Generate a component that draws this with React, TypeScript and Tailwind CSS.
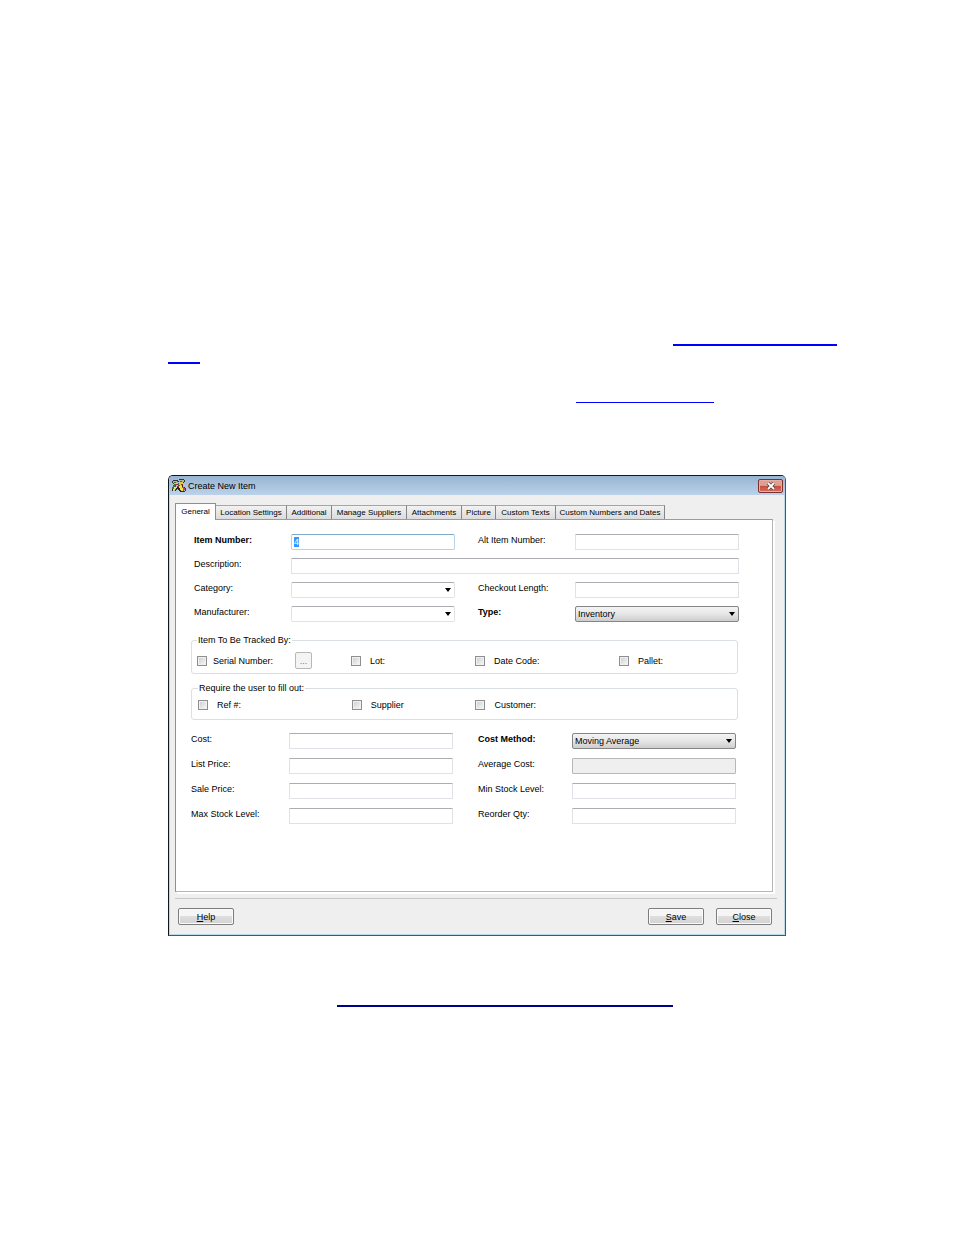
import { useEffect, useRef, type ReactNode } from 'react'
import clsx from 'clsx'

const TABS = [
  { name: 'General', width: 'w-[41px]' },
  { name: 'Location Settings', width: 'w-[71px]' },
  { name: 'Additional', width: 'w-[45px]' },
  { name: 'Manage Suppliers', width: 'w-[75px]' },
  { name: 'Attachments', width: 'w-[55px]' },
  { name: 'Picture', width: 'w-[34px]' },
  { name: 'Custom Texts', width: 'w-[60px]' },
  { name: 'Custom Numbers and Dates', width: 'w-[109px]' },
]

const inputClass =
  'h-4 w-full min-w-0 rounded-[1px] border border-[#dfe2e6] border-t-[#abadb3] bg-white px-0.5 text-[9px] leading-3 outline-none'

function Label({ id, bold, className, children }: { id: string; bold?: boolean; className?: string; children: ReactNode }) {
  return (
    <label htmlFor={id} className={clsx('pb-1 whitespace-nowrap', bold && 'font-bold', className)}>
      {children}
    </label>
  )
}

function Select({ id, value, raised }: { id: string; value?: string; raised?: boolean }) {
  return (
    <div className="relative">
      <select
        id={id}
        className={clsx(
          'block h-4 w-full appearance-none rounded-[2px] border px-0.5 text-[9px] leading-3 outline-none',
          raised
            ? 'border-[#858585] bg-linear-to-b from-[#f4f4f4] via-[#e6e6e6] to-[#cdcdcd]'
            : 'border-[#dfe2e6] border-t-[#abadb3] bg-white'
        )}
      >
        <option>{value}</option>
      </select>
      <svg viewBox="0 0 6 4" className="pointer-events-none absolute top-1.5 right-1 h-1 w-1.5">
        <path d="M0 0h6L3 4z" />
      </svg>
    </div>
  )
}

function Check({ id, label, wide = true }: { id: string; label: string; wide?: boolean }) {
  return (
    <div className={clsx('flex items-center', wide ? 'gap-[9px]' : 'gap-1.5')}>
      <input
        id={id}
        type="checkbox"
        className="size-2.5 shrink-0 appearance-none border border-[#8f8f8f] bg-linear-to-br from-[#c9ccd1] to-[#fafafa] shadow-[inset_0_0_0_1px_#f0f0f0]"
      />
      <label htmlFor={id} className="whitespace-nowrap">
        {label}
      </label>
    </div>
  )
}

function FormButton({ mnemonic, rest }: { mnemonic: string; rest: string }) {
  return (
    <button
      type="button"
      className="h-[17px] w-14 rounded-[2px] border border-[#7d7d7d] bg-linear-to-b from-[#f5f5f5] from-50% via-[#dedede] via-50% to-[#d2d2d2] text-[9px] leading-3 shadow-[inset_0_0_0_1px_#fafafa]"
    >
      <u>{mnemonic}</u>
      {rest}
    </button>
  )
}

function AppIcon() {
  return (
    <svg viewBox="0 0 14 14" className="h-3.5 w-3.5" shapeRendering="crispEdges">
      <path d="M1 1h5v1H1zM7 0h5v1H7zM12 1h1v2h-1zM0 2h1v2H0zM6 2h1v1H6zM1 4h1v1H1zM11 3h1v1h-1z" fill="#33352a" />
      <path d="M1 2h5v2H1zM7 1h5v2H7z" fill="#aeb3a4" />
      <path d="M8 2h2v1H8zM2 3h2v1H2zM5 2h1v1H5z" fill="#5a5a50" />
      <path d="M2 4h4v1H2zM7 3h4v2H7zM4 6h2v1H4zM8 5h1v1H8z" fill="#d8cf3c" />
      <path d="M2 5h2v1H2zM1 6h2v2H1zM0 8h2v2H0zM6 6h2v1H6zM6 4h1v2H6z" fill="#3f7438" />
      <path d="M3 6h1v2H3zM4 5h2v1H4zM9 5h2v1H9zM5 7h2v1H5zM3 10h1v1H3z" fill="#a42b2f" />
      <path d="M2 8h3v1H2zM2 9h2v1H2zM1 10h2v1H1zM7 7h3v2H7zM8 9h3v2H8zM9 11h2v1H9z" fill="#f0e34a" />
      <path d="M5 8h1v2H5zM4 9h1v2H4zM3 11h1v1H3zM0 10h1v2H0zM6 8h1v3H6zM7 9h1v3H7zM8 11h1v2H8zM9 12h3v1H9zM10 6h1v2h-1z" fill="#35201c" />
      <path d="M10 8h2v1h-2zM11 9h2v2h-2zM11 11h1v1h-1z" fill="#d33a5c" />
      <path d="M12 8h1v1h-1zM13 9h1v3h-1zM12 12h1v1h-1z" fill="#4c2b22" />
    </svg>
  )
}

export default function App() {
  const itemNumber = useRef<HTMLInputElement>(null)

  useEffect(() => {
    itemNumber.current?.focus({ preventScroll: true })
    itemNumber.current?.select()
  }, [])

  return (
    <main className="min-h-screen bg-white pt-[344px] pr-[117px] pl-[168px] font-['Liberation_Sans',Arial,sans-serif] text-[9px] leading-3 text-black">
      <a href="#locations" aria-label="Locations" className="ml-auto block h-0.5 w-[164px] bg-[#0000ff]" />
      <a href="#sites" aria-label="Sites" className="mt-4 block h-0.5 w-8 bg-[#0000ff]" />
      <a href="#items" aria-label="Items" className="mt-[38px] ml-[408px] block h-px w-[138px] bg-[#0000ff]" />

      <section className="mt-[72px] max-w-[618px] overflow-hidden rounded-t-[5px] border border-[#10181c] border-r-[#335f74] border-b-[#335f74] bg-[#efefef]">
        <header className="flex h-[19px] items-center bg-linear-to-b from-[#98b4d2] to-[#bbd2ea] pr-0.5 pl-[3px]">
          <AppIcon />
          <h1 className="ml-0.5 flex-1">Create New Item</h1>
          <button
            type="button"
            aria-label="Close window"
            className="flex h-3.5 w-[25px] items-center justify-center rounded-[2px] border border-[#7d2f2b] bg-linear-to-b from-[#e0a091] from-45% via-[#c2503f] via-50% to-[#d4705c] shadow-[inset_0_0_0_1px_#e5b0a4]"
          >
            <svg viewBox="0 0 10 8" className="h-2 w-2.5 shrink-0">
              <path d="M2 1l6 6M8 1L2 7" stroke="#5d4145" strokeWidth="3.4" />
              <path d="M2 1l6 6M8 1L2 7" stroke="#ffffff" strokeWidth="1.8" />
            </svg>
          </button>
        </header>

        <div className="border-x border-b border-[#b9d8e8] pt-2 pr-[7px] pb-[9px] pl-[5px]">
          <div className="mr-1">
            <div role="tablist" className="flex h-4 items-end text-[8px]">
              {TABS.map((tab, i) => (
                <button
                  key={tab.name}
                  type="button"
                  role="tab"
                  aria-selected={i === 0}
                  className={clsx(
                    'shrink-0 border-t border-r whitespace-nowrap',
                    tab.width,
                    i === 0
                      ? 'relative -mb-px h-[17px] border-l border-[#8c8f94] bg-white'
                      : 'h-3.5 border-t-[#a5a5a5] border-r-[#858585] bg-linear-to-b from-[#f2f2f2] to-[#dcdcdc]'
                  )}
                >
                  {tab.name}
                </button>
              ))}
            </div>

            <form className="border border-[#b4b6b9] border-t-[#9a9c9f] border-l-[#8a9098] bg-white pt-3.5 pr-[33px] pb-[67px] pl-[15px] shadow-[2px_2px_0_#ffffff]">
              <div className="grid grid-cols-[97px_1fr_120px_1fr] items-center gap-y-2 pl-[3px]">
                <Label id="item-number" bold>Item Number:</Label>
                <input
                  id="item-number"
                  ref={itemNumber}
                  defaultValue="4"
                  className="h-4 w-full min-w-0 rounded-[2px] border border-[#b3d3e8] border-t-[#7da9ca] bg-white px-0.5 text-[9px] leading-3 outline-none selection:bg-[#3399ff] selection:text-white"
                />
                <Label id="alt-number" className="pl-[23px]">Alt Item Number:</Label>
                <input id="alt-number" className={inputClass} />

                <Label id="description">Description:</Label>
                <input id="description" className={clsx(inputClass, 'col-span-3')} />

                <Label id="category">Category:</Label>
                <Select id="category" />
                <Label id="checkout" className="pl-[23px]">Checkout Length:</Label>
                <input id="checkout" className={inputClass} />

                <Label id="manufacturer">Manufacturer:</Label>
                <Select id="manufacturer" />
                <Label id="type" bold className="pl-[23px]">Type:</Label>
                <Select id="type" value="Inventory" raised />
              </div>

              <fieldset className="mt-3 mr-px rounded-[3px] border border-[#dadfe3] pt-1.5 pb-1 pl-[5px]">
                <legend className="px-px">Item To Be Tracked By:</legend>
                <div className="grid grid-cols-[154fr_124fr_144fr_118fr] items-center">
                  <div className="flex items-center">
                    <div className="w-[98px]">
                      <Check id="serial" label="Serial Number:" wide={false} />
                    </div>
                    <button
                      type="button"
                      aria-label="Serial number options"
                      className="h-[17px] w-[17px] rounded-[2px] border border-[#b8b8b8] bg-[#f4f4f4] text-[9px] leading-3 text-[#777777]"
                    >
                      ...
                    </button>
                  </div>
                  <Check id="lot" label="Lot:" />
                  <Check id="date-code" label="Date Code:" />
                  <Check id="pallet" label="Pallet:" />
                </div>
              </fieldset>

              <fieldset className="mt-2 mr-px rounded-[3px] border border-[#dadfe3] pt-[5px] pb-2 pl-1.5">
                <legend className="px-px">Require the user to fill out:</legend>
                <div className="grid grid-cols-[154fr_124fr_144fr_118fr] items-center">
                  <Check id="ref" label="Ref #:" />
                  <Check id="supplier" label="Supplier" />
                  <Check id="customer" label="Customer:" />
                </div>
              </fieldset>

              <div className="mt-[13px] mr-[3px] grid grid-cols-[98px_1fr_119px_1fr] items-center gap-y-[9px]">
                <Label id="cost">Cost:</Label>
                <input id="cost" className={inputClass} />
                <Label id="cost-method" bold className="pl-[25px]">Cost Method:</Label>
                <Select id="cost-method" value="Moving Average" raised />

                <Label id="list-price">List Price:</Label>
                <input id="list-price" className={inputClass} />
                <Label id="average-cost" className="pl-[25px]">Average Cost:</Label>
                <input
                  id="average-cost"
                  readOnly
                  className="h-4 w-full min-w-0 rounded-[1px] border border-[#b5b8bb] bg-[#efefef] px-0.5 text-[9px] leading-3 outline-none"
                />

                <Label id="sale-price">Sale Price:</Label>
                <input id="sale-price" className={inputClass} />
                <Label id="min-stock" className="pl-[25px]">Min Stock Level:</Label>
                <input id="min-stock" className={inputClass} />

                <Label id="max-stock">Max Stock Level:</Label>
                <input id="max-stock" className={inputClass} />
                <Label id="reorder" className="pl-[25px]">Reorder Qty:</Label>
                <input id="reorder" className={inputClass} />
              </div>
            </form>
          </div>

          <hr className="mt-1.5 border-t border-[#c6c6c6]" />

          <footer className="mt-[9px] flex gap-3 pr-[5px] pl-[3px]">
            <div className="flex-1">
              <FormButton mnemonic="H" rest="elp" />
            </div>
            <FormButton mnemonic="S" rest="ave" />
            <FormButton mnemonic="C" rest="lose" />
          </footer>
        </div>
      </section>

      <a href="#manual" aria-label="Manual" className="mt-[69px] ml-[169px] block h-0.5 w-[336px] bg-[#00008b]" />
    </main>
  )
}
